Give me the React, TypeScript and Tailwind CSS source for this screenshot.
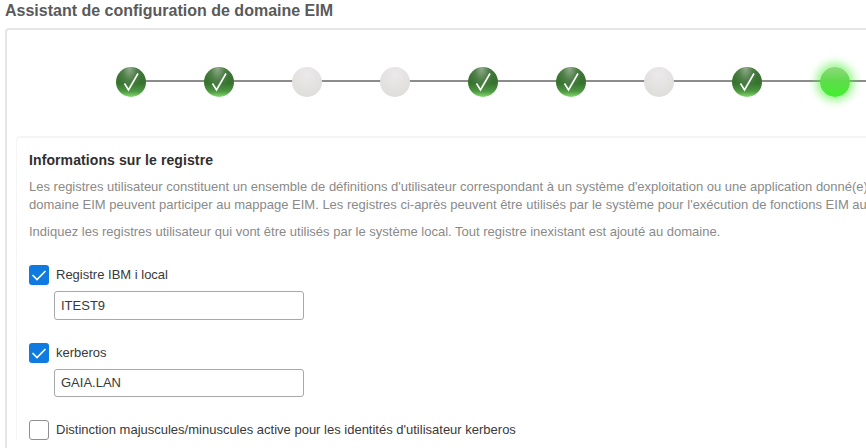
const steps = ['done', 'done', 'idle', 'idle', 'done', 'done', 'idle', 'done', 'active'];

function Step({ state }: { state: string }) {
  if (state === 'done') {
    return (
      <div className="relative z-10 flex h-[30px] w-[30px] shrink-0 items-center justify-center rounded-full bg-[radial-gradient(ellipse_at_45%_5%,rgba(170,190,165,0.75)_0%,rgba(120,150,115,0.35)_30%,rgba(60,120,50,0)_55%),linear-gradient(180deg,#3f7238_0%,#37732f_55%,#4f9a42_82%,#86dc70_100%)]">
        <svg width="30" height="30" viewBox="0 0 30 30" fill="none">
          <path d="M8.5 16.5 L12.5 23 L22 6.5" stroke="#fff" strokeWidth="1.6" />
        </svg>
      </div>
    );
  }
  if (state === 'active') {
    return (
      <div className="relative z-10 h-[30px] w-[30px] shrink-0 rounded-full bg-[linear-gradient(180deg,#8fd97c_0%,#5fdc4c_45%,#41f02f_100%)] shadow-[0_0_8px_4px_rgba(70,240,50,0.55)]" />
    );
  }
  return <div className="relative z-10 h-[30px] w-[30px] shrink-0 rounded-full bg-[radial-gradient(circle_at_50%_25%,#ebe9e9_0%,#e1dede_70%,#dcd9d9_100%)]" />;
}

function Check({ checked, label }: { checked: boolean; label: string }) {
  return (
    <label className="flex items-center gap-[7px] text-[13px] leading-[20px] text-[#393939]">
      {checked ? (
        <span className="flex h-5 w-5 items-center justify-center rounded-[3px] bg-[#0f7be0]">
          <svg width="20" height="20" viewBox="0 0 20 20" fill="none">
            <path d="M3.5 10 L8 14.5 L16.5 6" stroke="#fff" strokeWidth="1.6" />
          </svg>
        </span>
      ) : (
        <span className="h-5 w-5 rounded-[3px] border border-[#8f8f8f] bg-white" />
      )}
      <span>{label}</span>
    </label>
  );
}

function Field({ value, h }: { value: string; h: string }) {
  return (
    <div className={`ml-[25px] mt-[6px] flex w-[250px] items-center rounded-[3px] border border-[#a8a8a8] bg-white px-[6px] text-[13px] text-[#393939] ${h}`}>
      {value}
    </div>
  );
}

export default function App() {
  return (
    <div className="h-[448px] w-[866px] overflow-hidden bg-white font-['Liberation_Sans',Arial,sans-serif]">
      <h1 className="ml-[5px] h-[28px] pt-[1px] text-[16px] leading-[20px] font-bold whitespace-nowrap text-[#5a5a5a]">
        Assistant de configuration de domaine EIM
      </h1>
      <div className="ml-[5px] h-[440px] w-[900px] rounded-tl-[4px] border-t-2 border-l-2 border-[#e6e6e6] pl-[9px]">
        <div className="relative flex h-[106px] items-start gap-[58px] pt-[37px] pl-[100px]">
          <div className="absolute top-[50px] left-[115px] h-[2px] w-[760px] bg-[#8c8c8c]" />
          {steps.map((s, i) => (
            <Step key={i} state={s} />
          ))}
        </div>
        <div className="rounded-tl-[4px] border-t-2 border-l border-[#f5f5f5] pt-[14px] pl-[12px]">
          <h2 className="text-[14px] leading-[16px] font-bold tracking-[0.1px] text-[#2f2f2f]">Informations sur le registre</h2>
          <p className="mt-[10px] text-[13px] leading-[18px] whitespace-nowrap text-[#8a8a8a]">
            Les registres utilisateur constituent un ensemble de définitions d'utilisateur correspondant à un système d'exploitation ou une application donné(e)
            <br />
            domaine EIM peuvent participer au mappage EIM. Les registres ci-après peuvent être utilisés par le système pour l'exécution de fonctions EIM au
          </p>
          <p className="mt-[9px] text-[13px] leading-[18px] whitespace-nowrap text-[#8a8a8a]">
            Indiquez les registres utilisateur qui vont être utilisés par le système local. Tout registre inexistant est ajouté au domaine.
          </p>
          <div className="mt-[24px]">
            <Check checked label="Registre IBM i local" />
            <Field value="ITEST9" h="h-[29px]" />
          </div>
          <div className="mt-[23px]">
            <Check checked label="kerberos" />
            <Field value="GAIA.LAN" h="h-[28px]" />
          </div>
          <div className="mt-[23px]">
            <Check checked={false} label="Distinction majuscules/minuscules active pour les identités d'utilisateur kerberos" />
          </div>
        </div>
      </div>
    </div>
  );
}
